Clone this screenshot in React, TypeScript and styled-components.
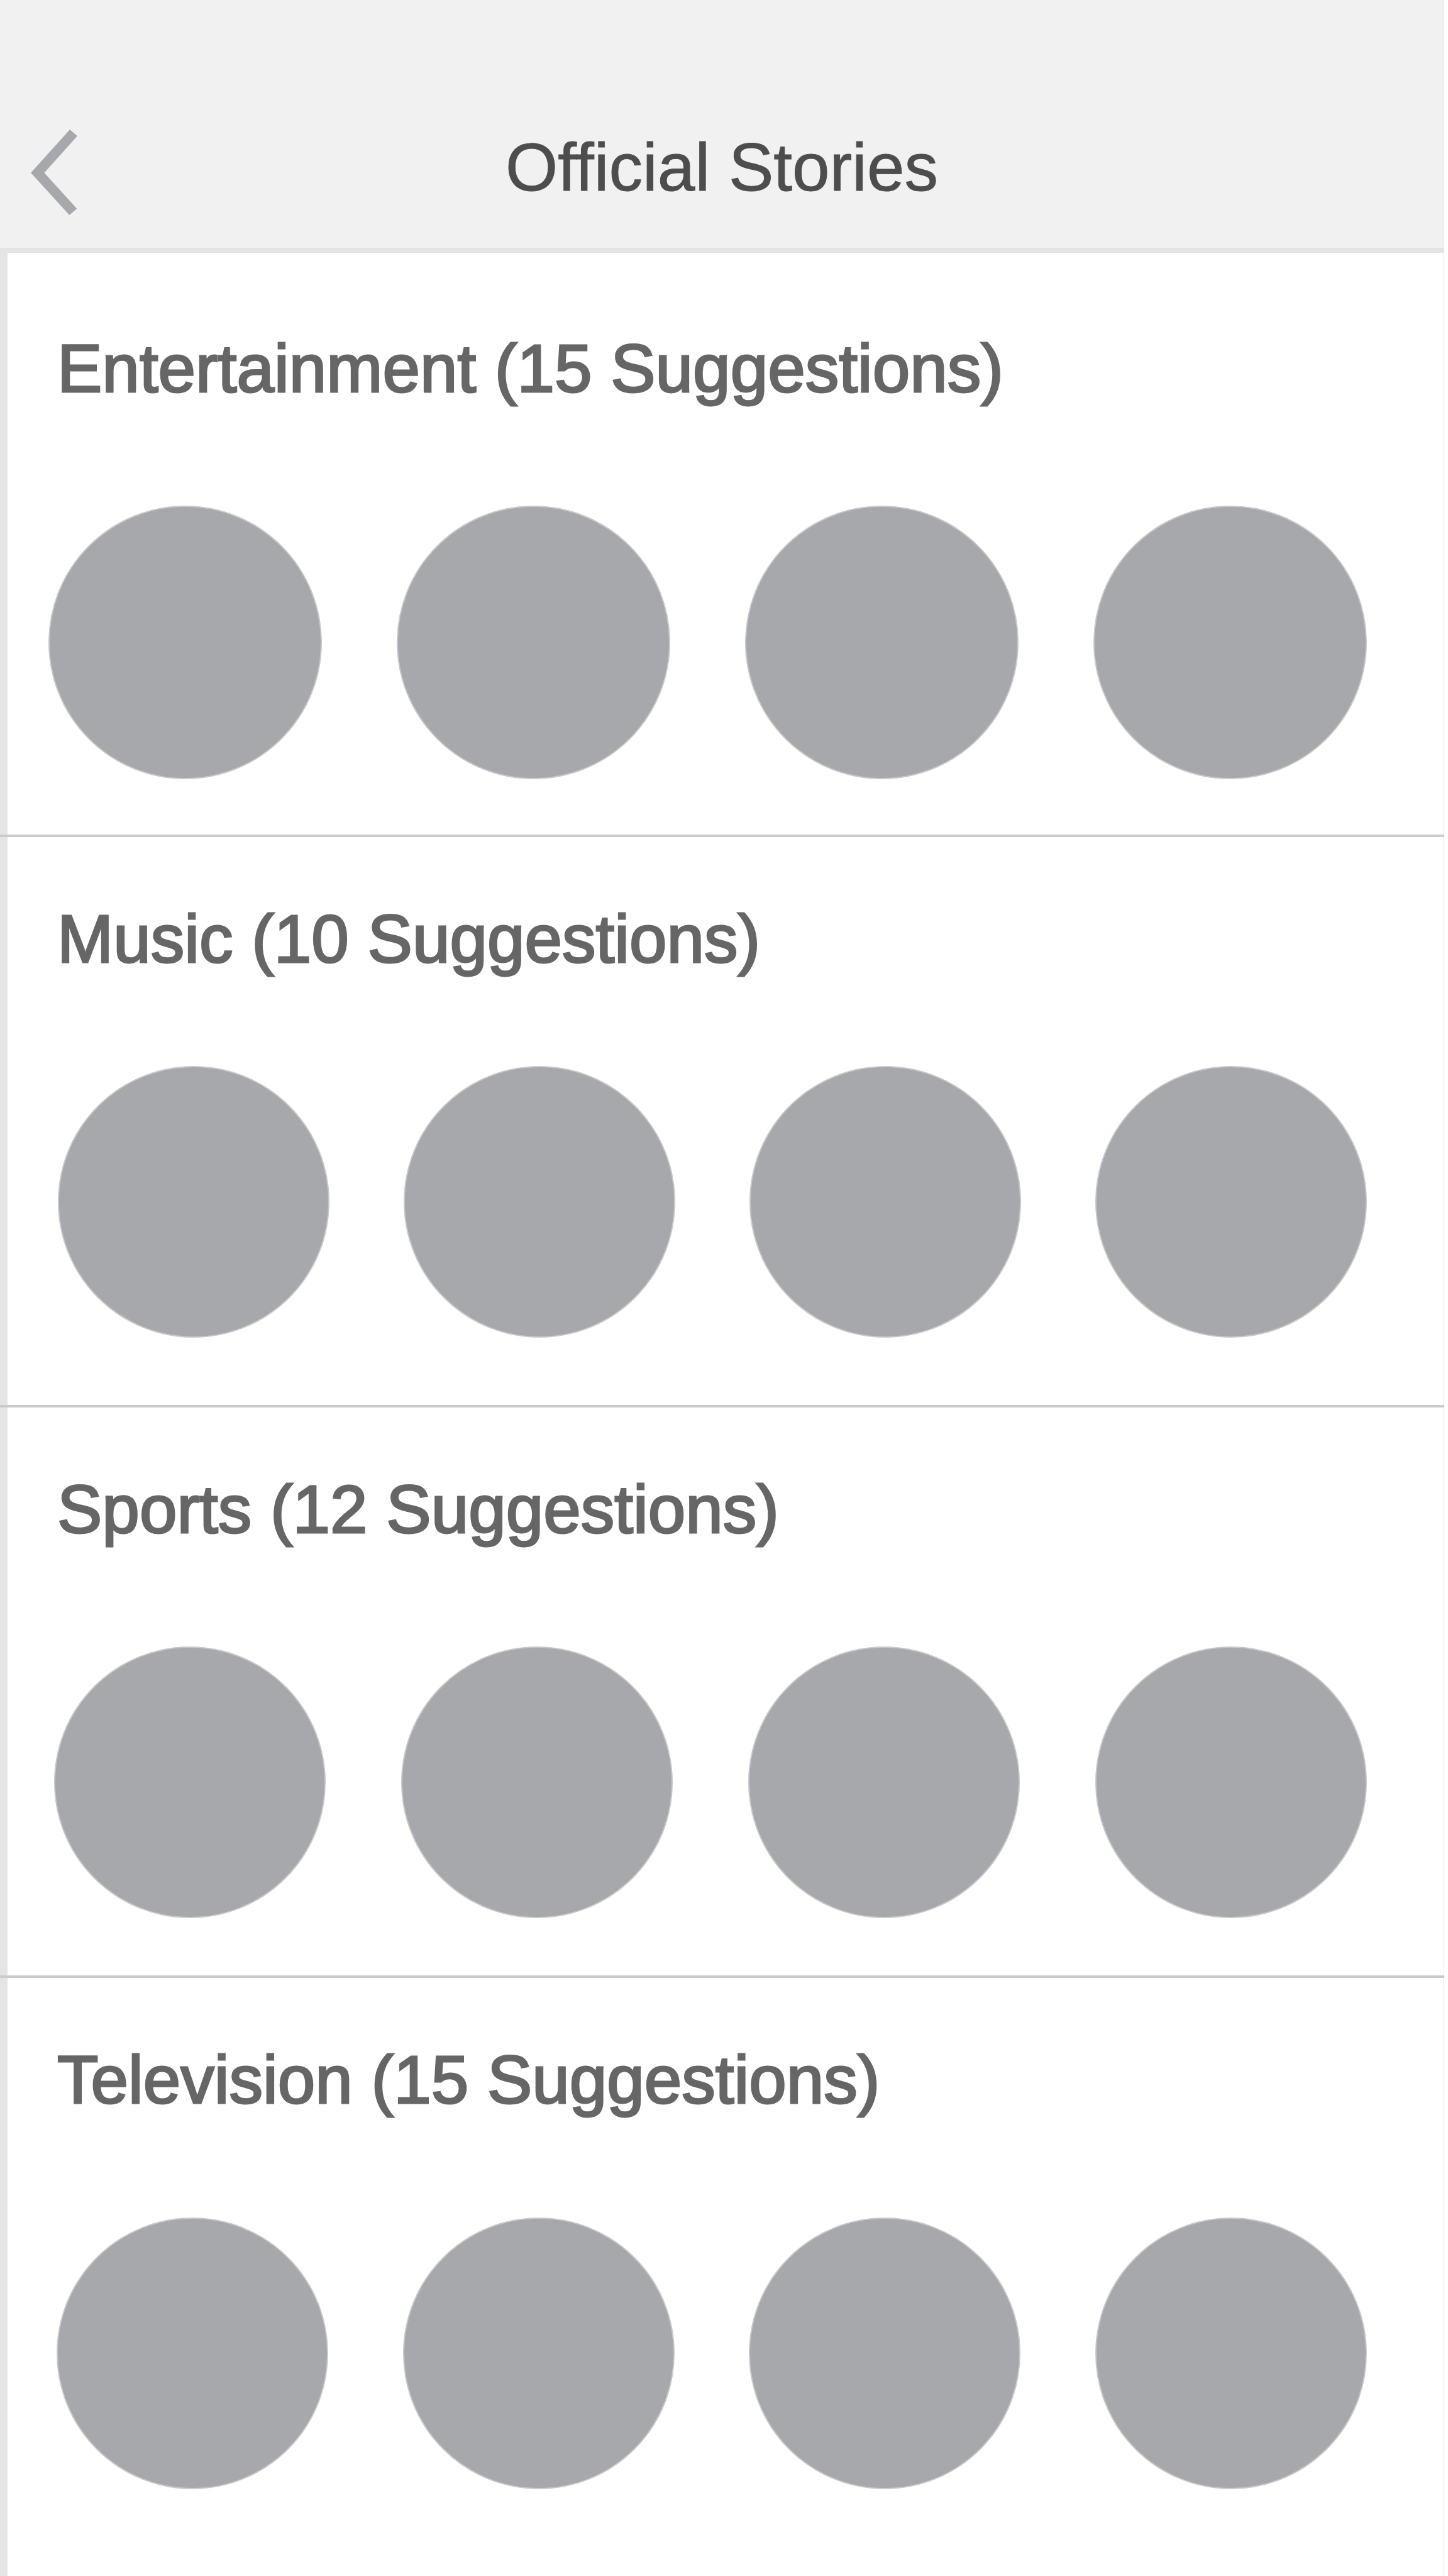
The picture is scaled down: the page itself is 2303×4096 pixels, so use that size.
import React from "react";
import styled, { createGlobalStyle } from "styled-components";

const GlobalStyle = createGlobalStyle`
  * { box-sizing: border-box; }
  body { margin: 0; background: #fff; font-family: "Liberation Sans", Arial, sans-serif; }
`;

const Screen = styled.div`
  display: flex;
  flex-direction: column;
  min-height: 100vh;
  padding-right: 6px;
`;

const Header = styled.header`
  display: grid;
  grid-template-columns: 200px 1fr 200px;
  align-items: start;
  height: 402px;
  padding-top: 194px;
  background: #f1f1f1;
  border-bottom: 8px solid #e4e4e4;
  border-right: 1px solid #e8e8e8;
`;

const BackButton = styled.button`
  display: flex;
  width: 140px;
  padding: 12px 0 0 49px;
  border: 0;
  background: none;
  cursor: pointer;
`;

const Title = styled.h1`
  margin: 0;
  text-align: center;
  font-size: 107px;
  line-height: 144px;
  font-weight: 400;
  color: #4d4d4d;
  -webkit-text-stroke: 1px #4d4d4d;
`;

const Content = styled.main`
  flex: 1;
  border-left: 12px solid #e4e4e4;
  border-right: 1px solid #e8e8e8;
`;

const Section = styled.section`
  height: 907px;
  margin: 0 -1px 0 -12px;
  padding: 102px 123px 0 0;
  border-bottom: 4px solid #cbcbcb;
  &:first-child { height: 929px; padding-top: 124px; }
  &:last-child { border-bottom: 0; }
`;

const Heading = styled.h2`
  margin: 0 0 0 91px;
  font-size: 107px;
  line-height: 120px;
  font-weight: 400;
  color: #666;
  -webkit-text-stroke: 3px #666;
`;

const Stories = styled.ul<{ $gap: number; $inset: number }>`
  display: flex;
  justify-content: space-between;
  list-style: none;
  margin: ${(p) => p.$gap}px 0 0 ${(p) => p.$inset}px;
  padding: 0;
`;

const Story = styled.button<{ $size: number }>`
  display: block;
  width: ${(p) => p.$size}px;
  height: ${(p) => p.$size}px;
  padding: 0;
  border: 2px solid #c8c8c9;
  border-radius: 50%;
  background: #a7a8ac;
  cursor: pointer;
`;

const categories = [
  { name: "Entertainment", count: 15, gap: 158, inset: 77, size: 435 },
  { name: "Music", count: 10, gap: 142, inset: 92, size: 432 },
  { name: "Sports", count: 12, gap: 158, inset: 86, size: 432 },
  { name: "Television", count: 15, gap: 159, inset: 90, size: 432 },
];

export default function App() {
  return (
    <Screen>
      <GlobalStyle />
      <Header>
        <BackButton aria-label="Back">
          <svg width="74" height="136" viewBox="0 0 100 184" fill="#a7a8ac">
            <path d="M84 0 100 14 29 93 99 170 83 184 0 93Z" />
          </svg>
        </BackButton>
        <Title>Official Stories</Title>
      </Header>
      <Content>
        {categories.map((c) => (
          <Section key={c.name}>
            <Heading>{`${c.name} (${c.count} Suggestions)`}</Heading>
            <Stories $gap={c.gap} $inset={c.inset}>
              {[1, 2, 3, 4].map((n) => (
                <li key={n}>
                  <Story $size={c.size} aria-label={`${c.name} story ${n}`} />
                </li>
              ))}
            </Stories>
          </Section>
        ))}
      </Content>
    </Screen>
  );
}
